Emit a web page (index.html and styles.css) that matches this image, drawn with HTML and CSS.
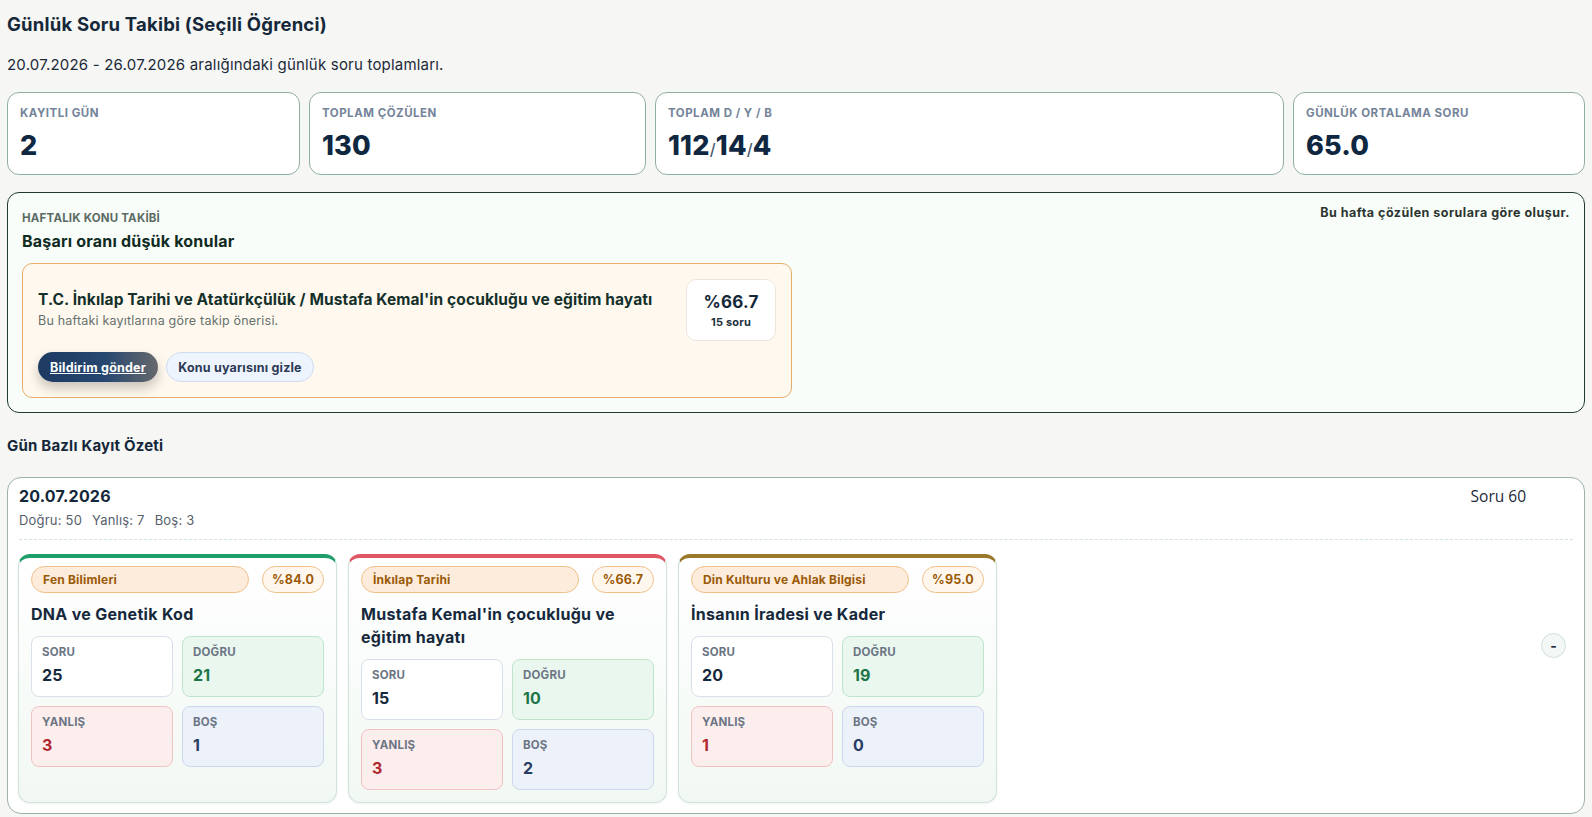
FILE: index.html
```html
<!DOCTYPE html>
<html lang="tr">
<head>
    <meta charset="UTF-8">
    <meta name="viewport" content="width=device-width, initial-scale=1.0">
    <title>Günlük Soru Takibi</title>
    <link rel="stylesheet" href="styles.css">
</head>
<body>
    <div class="page">
        <h1 class="page-title">Günlük Soru Takibi (Seçili Öğrenci)</h1>
        <p class="page-sub">20.07.2026 - 26.07.2026 aralığındaki günlük soru toplamları.</p>

        <div class="stats">
            <div class="stat">
                <div class="stat-label">Kayıtlı Gün</div>
                <div class="stat-value">2</div>
            </div>
            <div class="stat">
                <div class="stat-label">Toplam Çözülen</div>
                <div class="stat-value">130</div>
            </div>
            <div class="stat">
                <div class="stat-label">Toplam D / Y / B</div>
                <div class="stat-value">112<span class="sep">/</span>14<span class="sep">/</span>4</div>
            </div>
            <div class="stat">
                <div class="stat-label">Günlük Ortalama Soru</div>
                <div class="stat-value">65.0</div>
            </div>
        </div>

        <section class="weekly">
            <div class="weekly-head">
                <div>
                    <div class="weekly-label">HAFTALIK KONU TAKİBİ</div>
                    <h2 class="weekly-title">Başarı oranı düşük konular</h2>
                </div>
                <div class="weekly-note">Bu hafta çözülen sorulara göre oluşur.</div>
            </div>
            <div class="topic">
                <div class="topic-top">
                    <div>
                        <div class="topic-name">T.C. İnkılap Tarihi ve Atatürkçülük / Mustafa Kemal'in çocukluğu ve eğitim hayatı</div>
                        <div class="topic-hint">Bu haftaki kayıtlarına göre takip önerisi.</div>
                    </div>
                    <div class="topic-rate">
                        <div class="rate-num">%66.7</div>
                        <div class="rate-count">15 soru</div>
                    </div>
                </div>
                <div class="topic-actions">
                    <button class="btn btn-primary">Bildirim gönder</button>
                    <button class="btn btn-light">Konu uyarısını gizle</button>
                </div>
            </div>
        </section>

        <h3 class="section-title">Gün Bazlı Kayıt Özeti</h3>

        <div class="day">
            <div class="day-head">
                <div>
                    <div class="day-date">20.07.2026</div>
                    <div class="day-meta"><span>Doğru: 50</span><span>Yanlış: 7</span><span>Boş: 3</span></div>
                </div>
                <div class="day-total">Soru 60</div>
            </div>
            <div class="day-body">
                <div class="subjects">
                    <div class="subject green">
                        <div class="chips">
                            <span class="chip">Fen Bilimleri</span>
                            <span class="chip-rate">%84.0</span>
                        </div>
                        <div class="subject-title">DNA ve Genetik Kod</div>
                        <div class="nums">
                            <div class="num">
                                <div class="num-label">SORU</div>
                                <div class="num-value">25</div>
                            </div>
                            <div class="num ok">
                                <div class="num-label">DOĞRU</div>
                                <div class="num-value">21</div>
                            </div>
                            <div class="num bad">
                                <div class="num-label">YANLIŞ</div>
                                <div class="num-value">3</div>
                            </div>
                            <div class="num empty">
                                <div class="num-label">BOŞ</div>
                                <div class="num-value">1</div>
                            </div>
                        </div>
                    </div>

                    <div class="subject red">
                        <div class="chips">
                            <span class="chip">İnkılap Tarihi</span>
                            <span class="chip-rate">%66.7</span>
                        </div>
                        <div class="subject-title">Mustafa Kemal'in çocukluğu ve eğitim hayatı</div>
                        <div class="nums">
                            <div class="num">
                                <div class="num-label">SORU</div>
                                <div class="num-value">15</div>
                            </div>
                            <div class="num ok">
                                <div class="num-label">DOĞRU</div>
                                <div class="num-value">10</div>
                            </div>
                            <div class="num bad">
                                <div class="num-label">YANLIŞ</div>
                                <div class="num-value">3</div>
                            </div>
                            <div class="num empty">
                                <div class="num-label">BOŞ</div>
                                <div class="num-value">2</div>
                            </div>
                        </div>
                    </div>

                    <div class="subject gold">
                        <div class="chips">
                            <span class="chip">Din Kulturu ve Ahlak Bilgisi</span>
                            <span class="chip-rate">%95.0</span>
                        </div>
                        <div class="subject-title">İnsanın İradesi ve Kader</div>
                        <div class="nums">
                            <div class="num">
                                <div class="num-label">SORU</div>
                                <div class="num-value">20</div>
                            </div>
                            <div class="num ok">
                                <div class="num-label">DOĞRU</div>
                                <div class="num-value">19</div>
                            </div>
                            <div class="num bad">
                                <div class="num-label">YANLIŞ</div>
                                <div class="num-value">1</div>
                            </div>
                            <div class="num empty">
                                <div class="num-label">BOŞ</div>
                                <div class="num-value">0</div>
                            </div>
                        </div>
                    </div>
                </div>
                <button class="collapse">-</button>
            </div>
        </div>
    </div>
</body>
</html>
```

FILE: styles.css
```css
* {
    margin: 0;
    padding: 0;
    box-sizing: border-box;
}

body {
    font-family: Inter, "DejaVu Sans", sans-serif;
    background-color: #f6f6f4;
    color: #13283a;
    letter-spacing: 0.2px;
}

.page {
    padding: 10px 7px 0 7px;
}

.page-title {
    font-size: 18.5px;
    line-height: 28px;
    font-weight: 700;
    color: #14283a;
}

.page-sub {
    margin-top: 16px;
    font-size: 15px;
    line-height: 22px;
    color: #1c2a38;
}

/* top stat cards */
.stats {
    display: grid;
    grid-template-columns: 293px 337px 629px 1fr;
    gap: 9px;
    margin-top: 16px;
}

.stat {
    background-color: #fff;
    border: 1px solid #8fb09f;
    border-radius: 12px;
    padding: 12px 12px 7px 12px;
}

.stat-label {
    font-size: 11.5px;
    line-height: 16px;
    font-weight: 700;
    letter-spacing: 0.5px;
    text-transform: uppercase;
    color: #74849a;
}

.stat-value {
    margin-top: 7px;
    font-size: 27px;
    line-height: 36px;
    font-weight: 800;
    color: #0f2740;
}

.stat-value .sep {
    font-size: 16px;
    font-weight: 500;
    color: #4a5a6c;
}

/* weekly topic panel */
.weekly {
    margin-top: 17px;
    border: 1px solid #1e3a30;
    border-radius: 12px;
    background-color: #f8fdf9;
    padding: 17px 14px 14px 14px;
}

.weekly-head {
    display: flex;
    justify-content: space-between;
    align-items: flex-start;
}

.weekly-label {
    font-size: 11.5px;
    line-height: 16px;
    font-weight: 700;
    color: #5b6b64;
}

.weekly-title {
    margin-top: 4px;
    font-size: 16px;
    line-height: 22px;
    font-weight: 700;
    color: #0f2a22;
}

.weekly-note {
    margin-top: -6px;
    font-size: 12.5px;
    line-height: 18px;
    font-weight: 700;
    letter-spacing: 0.5px;
    color: #2b3530;
}

.topic {
    margin-top: 11px;
    max-width: 770px;
    border: 1px solid #e6ae6a;
    border-radius: 10px;
    background-color: #fff8ee;
    padding: 15px 15px 15px 15px;
}

.topic-top {
    display: flex;
    justify-content: space-between;
    align-items: center;
    gap: 16px;
}

.topic-name {
    font-size: 15.5px;
    line-height: 20px;
    font-weight: 700;
    letter-spacing: 0.1px;
    color: #14302a;
}

.topic-hint {
    margin-top: 2px;
    font-size: 12.5px;
    line-height: 18px;
    color: #66706c;
}

.topic-rate {
    width: 90px;
    height: 62px;
    background-color: #fff;
    border: 1px solid #ece6dc;
    border-radius: 10px;
    text-align: center;
    padding-top: 11px;
}

.rate-num {
    font-size: 17px;
    line-height: 22px;
    font-weight: 700;
    color: #14283a;
}

.rate-count {
    font-size: 11px;
    line-height: 18px;
    font-weight: 700;
    color: #22303c;
}

.topic-actions {
    display: flex;
    gap: 8px;
    margin-top: 11px;
}

.btn {
    height: 30px;
    padding: 0 8px;
    border-radius: 15px;
    font-family: inherit;
    font-size: 12.5px;
    font-weight: 700;
    letter-spacing: 0.2px;
    cursor: pointer;
}

.btn-primary {
    width: 120px;
    border: none;
    color: #fff;
    text-decoration: underline;
    background: linear-gradient(90deg, #1d3a62 0%, #264770 55%, #66686c 100%);
    box-shadow: 0 6px 12px rgba(0, 0, 0, 0.22);
}

.btn-light {
    width: 148px;
    border: 1px solid #cfdcef;
    background-color: #eef4fd;
    color: #2c3a56;
}

/* day summary */
.section-title {
    margin-top: 23px;
    font-size: 15px;
    line-height: 20px;
    font-weight: 700;
    color: #14283a;
}

.day {
    margin-top: 21px;
    background-color: #fff;
    border: 1px solid #9cb4a6;
    border-radius: 14px;
    padding: 7px 11px 10px 11px;
}

.day-head {
    display: flex;
    justify-content: space-between;
    align-items: flex-start;
    padding-bottom: 10px;
    border-bottom: 1px dashed #d3e3dc;
}

.day-date {
    font-size: 16px;
    line-height: 22px;
    font-weight: 700;
    color: #14283a;
}

.day-meta {
    display: flex;
    gap: 10px;
    margin-top: 4px;
    font-size: 13px;
    line-height: 18px;
    color: #56606c;
}

.day-total {
    margin-right: 47px;
    font-family: "Open Sans", "Noto Sans", sans-serif;
    font-size: 15.5px;
    line-height: 22px;
    letter-spacing: 0;
    color: #1e2a3a;
}

.day-body {
    display: flex;
    align-items: flex-start;
    margin-top: 14px;
}

.subjects {
    display: grid;
    grid-template-columns: repeat(3, 319px);
    gap: 11px;
    margin-left: -1px;
}

.subject {
    border: 1px solid #cfe3d7;
    border-top: 4px solid #1f9d6b;
    border-radius: 12px;
    padding: 8px 12px 12px 12px;
    background: linear-gradient(180deg, #ffffff 0%, #f1f8f3 100%);
    box-shadow: 0 1px 3px rgba(0, 0, 0, 0.05);
}

.subject.red {
    border-top-color: #e05764;
}

.subject.gold {
    border-top-color: #9a7a2a;
}

.chips {
    display: flex;
    gap: 13px;
}

.chip {
    flex: 1;
    height: 27px;
    line-height: 25px;
    padding: 0 11px;
    border: 1px solid #f0c088;
    border-radius: 14px;
    background-color: #fdebdb;
    color: #9a5a06;
    font-size: 12px;
    font-weight: 700;
}

.chip-rate {
    width: 62px;
    height: 27px;
    line-height: 25px;
    text-align: center;
    border: 1px solid #f0c088;
    border-radius: 14px;
    background-color: #fff7ee;
    color: #9a5a06;
    font-size: 12.5px;
    font-weight: 700;
}

.subject-title {
    margin-top: 10px;
    font-size: 16px;
    line-height: 23px;
    font-weight: 700;
    letter-spacing: 0.3px;
    color: #16283c;
}

.nums {
    display: grid;
    grid-template-columns: 1fr 1fr;
    gap: 9px;
    margin-top: 10px;
}

.num {
    height: 61px;
    border: 1px solid #d8e0ea;
    border-radius: 8px;
    background-color: #fff;
    padding: 7px 10px 0 10px;
}

.num-label {
    font-size: 11.5px;
    line-height: 16px;
    font-weight: 700;
    color: #6b7584;
}

.num-value {
    margin-top: 4px;
    font-size: 16px;
    line-height: 22px;
    font-weight: 700;
    color: #16283c;
}

.num.ok {
    background-color: #e9f7ee;
    border-color: #bfe4cc;
}

.num.ok .num-value {
    color: #1d7447;
}

.num.bad {
    background-color: #fdeeee;
    border-color: #f2c2c2;
}

.num.bad .num-value {
    color: #b3262e;
}

.num.empty {
    background-color: #edf1fa;
    border-color: #cdd7ec;
}

.num.empty .num-value {
    color: #283c64;
}

.collapse {
    margin-left: auto;
    margin-right: 7px;
    margin-top: 79px;
    width: 25px;
    height: 25px;
    border-radius: 50%;
    border: 1px solid #cfe0d8;
    background-color: #f3f7f5;
    color: #1e2a3a;
    font-family: inherit;
    font-size: 14px;
    font-weight: 700;
    line-height: 22px;
    cursor: pointer;
}
```
